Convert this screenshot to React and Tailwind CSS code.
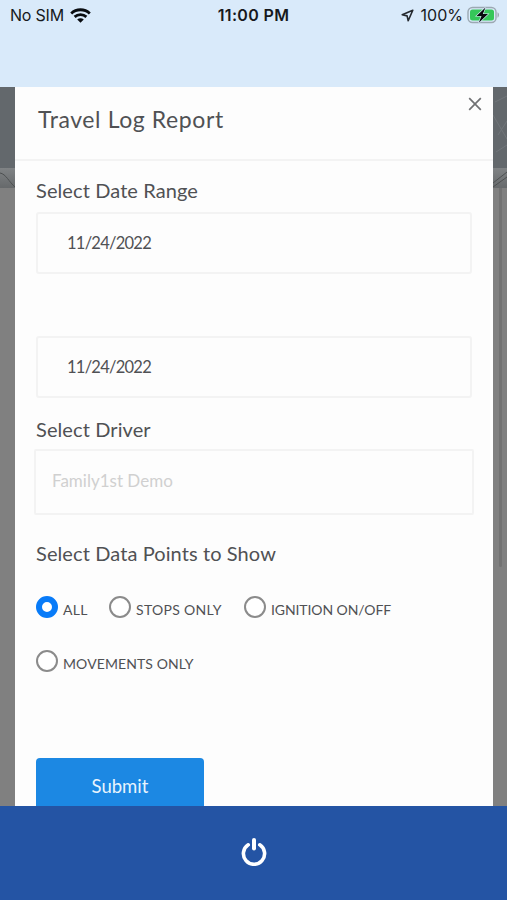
import React, { useState } from 'react';

const OPTIONS = [
  { id: 'all', label: 'ALL', text: 'w-[46px] tracking-[0.3px]' },
  { id: 'stops', label: 'STOPS ONLY', text: 'w-[108px] tracking-[0.3px]' },
  { id: 'ignition', label: 'IGNITION ON/OFF', text: 'w-[130px] tracking-[-0.1px]' },
  { id: 'movements', label: 'MOVEMENTS ONLY', text: 'w-[150px] tracking-[0.1px]' },
];

function StatusBar() {
  return (
    <header className="h-[87px] shrink-0 bg-[#d9eafa] text-[#16191d] font-['Inter',sans-serif]">
      <div className="grid grid-cols-[1fr_auto_1fr] items-center h-[30px] pl-[10px] pr-[7px]">
        <div className="flex items-center gap-[6px]">
          <span className="text-[16px] leading-5 tracking-[-0.2px]">No SIM</span>
          <svg width="21" height="15" viewBox="0 0 21 15" fill="none" stroke="#090c10" strokeWidth="2.8">
            <path d="M1.2 5.4C6.4.5 14.6.5 19.8 5.4" />
            <path d="M4.6 8.9c3.3-3 8.5-3 11.8 0" />
            <path d="M10.5 14.8 7.2 11.5c1.8-1.7 4.8-1.7 6.6 0z" fill="#090c10" stroke="none" />
          </svg>
        </div>
        <span className="-ml-[3px] text-[16px] leading-5 font-semibold tracking-[0.35px]">11:00 PM</span>
        <div className="flex items-center justify-end">
          <svg className="mr-[7px]" width="13" height="13" viewBox="0 0 13 13" fill="none" stroke="#25292e" strokeWidth="1.6" strokeLinejoin="round">
            <path d="M11.8 1.2 1.2 5.8l4.9 1.1 1.1 4.9z" />
          </svg>
          <span className="text-[16px] leading-5">100%</span>
          <svg className="ml-[4px]" width="33" height="18" viewBox="0 0 33 18">
            <rect x="1" y="1.5" width="28" height="15" rx="4.5" fill="none" stroke="#9ca8b2" strokeWidth="1.4" />
            <rect x="3" y="3.5" width="24" height="11" rx="2.5" fill="#35c759" />
            <path d="M30.5 6.3c2 .9 2 4.5 0 5.4z" fill="#9ca8b2" />
            <path d="M18.5 1.5 9.5 10h5l-2.7 6.8L21 8h-5.2z" fill="#080b0e" stroke="#d9eafa" strokeWidth="1.2" paintOrder="stroke" />
          </svg>
        </div>
      </div>
    </header>
  );
}

// Strip of the dimmed page that stays visible on either side of the dialog
function Backdrop({ right }) {
  return (
    <div className="flex-1 bg-[#808080]">
      <div className="h-[81px] bg-[#63686c]">
        {right && (
          <svg width="14" height="81" fill="none" stroke="#71767a">
            <path d="M2 15 14 9M0 28l14 24M3 65l11-7M5 48l9-14" />
          </svg>
        )}
      </div>
      <div className="h-5 bg-linear-to-b from-[#808385] to-[#66696b]">
        <svg width="15" height="20" fill="none" stroke="#4d5051">
          {right ? <path d="M0 15 14 4M0 19 14 9" /> : <path d="M0 5c6 1 9 9 15 14" />}
        </svg>
      </div>
      {right && <div className="ml-[6px] w-[3px] h-[379px] rounded-b-full bg-[#727272]" />}
    </div>
  );
}

function Label({ children }) {
  return <h2 className="h-6 text-[20px] leading-6 tracking-[0.1px] whitespace-nowrap">{children}</h2>;
}

function DateField({ value, className }) {
  return (
    <div className={`w-[436px] h-[62px] border-2 border-[#f3f3f3] rounded-[3px] pl-[29px] flex items-center text-[16.5px] tracking-[-0.75px] ${className}`}>
      {value}
    </div>
  );
}

function Radio({ option, checked, onSelect }) {
  return (
    <button type="button" role="radio" aria-checked={checked} onClick={() => onSelect(option.id)} className="flex h-[22px]">
      <span className={checked
        ? 'size-[22px] shrink-0 rounded-full bg-white border-[6px] border-[#087bf8]'
        : 'size-[22px] shrink-0 rounded-full bg-white border-2 border-[#8b8b8b]'}
      />
      <span className={`ml-[5px] pt-[3px] text-left text-[14px] leading-[22px] whitespace-nowrap ${option.text}`}>
        {option.label}
      </span>
    </button>
  );
}

export default function App() {
  const [points, setPoints] = useState('all');

  return (
    <div className="w-[507px] h-[900px] flex flex-col overflow-hidden">
      <StatusBar />

      <div className="flex flex-1 min-h-0 overflow-hidden">
        <Backdrop />
        <main className="w-[478px] h-[719px] shrink-0 bg-[#fdfdfd] text-[#505154] font-['Lato',sans-serif] overflow-hidden">
          <div className="h-[74px] border-b-2 border-[#f3f3f3] flex justify-between pl-[23px] pr-[11px]">
            <h1 className="pt-[18px] text-[23px] leading-7 tracking-[0.6px]">Travel Log Report</h1>
            <button type="button" aria-label="Close" className="h-[14px] mt-[10px]">
              <svg width="14" height="14" viewBox="0 0 14 14" fill="none" stroke="#707173" strokeWidth="1.7">
                <path d="m1.2 1.2 11.6 11.6M12.8 1.2 1.2 12.8" />
              </svg>
            </button>
          </div>

          <div className="pl-[21px] pt-[17px]">
            <Label>Select Date Range</Label>
            <DateField value="11/24/2022" className="mt-[10px]" />
            <DateField value="11/24/2022" className="mt-[62px] mb-[19px]" />
            <Label>Select Driver</Label>
            <div className="-ml-[2px] mt-[8px] w-[440px] h-[66px] border-2 border-[#f3f3f3] rounded-[2px] pl-4 pb-[2px] flex items-center text-[17px] text-[#d0d0d0]">
              Family1st Demo
            </div>
            <div className="mt-[26px]">
              <Label>Select Data Points to Show</Label>
            </div>

            <div role="radiogroup" className="mt-[31px] flex flex-wrap gap-y-8 w-[400px]">
              {OPTIONS.map((o) => (
                <Radio key={o.id} option={o} checked={points === o.id} onSelect={setPoints} />
              ))}
            </div>

            <button type="button" className="block mt-[86px] w-[168px] h-[58px] rounded-[4px] bg-[#1c88e3] text-[#e8f4fd] text-[18.5px]">
              Submit
            </button>
          </div>
        </main>
        <Backdrop right />
      </div>

      <footer className="h-[94px] shrink-0 bg-[#2454a4] flex justify-center">
        <button type="button" aria-label="Power" className="h-[28px] mt-[32px]">
          <svg width="26" height="28" viewBox="0 0 26 28" fill="none" stroke="#fff" strokeWidth="3.6" strokeLinecap="round">
            <path d="M13 2v8.5" strokeWidth="4" />
            <path d="M7.2 6.8a10.6 10.6 0 1 0 11.6 0" />
          </svg>
        </button>
      </footer>
    </div>
  );
}
